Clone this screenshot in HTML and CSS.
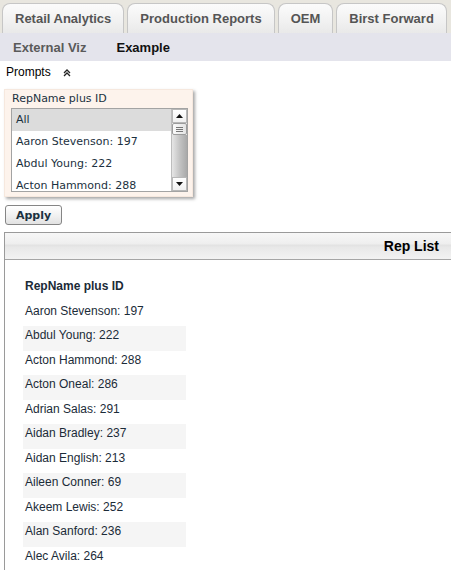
FILE: index.html
```html
<!DOCTYPE html>
<html>
<head>
<meta charset="utf-8">
<link rel="stylesheet" href="styles.css">
</head>
<body>
<div class="tabbar">
  <div class="tab">Retail Analytics</div>
  <div class="tab">Production Reports</div>
  <div class="tab">OEM</div>
  <div class="tab">Birst Forward</div>
  <div class="tab tab-more"></div>
</div>
<div class="subbar">
  <div class="subtab">External Viz</div>
  <div class="subtab active">Example</div>
</div>
<div class="prompts">
  <span>Prompts</span>
  <svg class="chev" width="8" height="8" viewBox="0 0 8 8"><path d="M1 4 L4 1 L7 4 M1 7 L4 4 L7 7" fill="none" stroke="#222" stroke-width="1.3"/></svg>
</div>
<div class="promptbox">
  <div class="plabel">RepName plus ID</div>
  <div class="listbox">
    <div class="items">
      <div class="item selected">All</div>
      <div class="item">Aaron Stevenson: 197</div>
      <div class="item">Abdul Young: 222</div>
      <div class="item">Acton Hammond: 288</div>
    </div>
    <div class="sbar">
      <div class="sbtn"><svg width="7" height="4" viewBox="0 0 7 4"><path d="M0 4 L3.5 0 L7 4 Z" fill="#111"/></svg></div>
      <div class="thumb"><i></i><i></i><i></i></div>
      <div class="track"></div>
      <div class="sbtn"><svg width="7" height="4" viewBox="0 0 7 4"><path d="M0 0 L3.5 4 L7 0 Z" fill="#111"/></svg></div>
    </div>
  </div>
</div>
<button class="apply">Apply</button>
<div class="panel">
  <div class="phead">Rep List</div>
  <div class="pbody">
    <div class="table">
      <div class="row head">RepName plus ID</div>
      <div class="row">Aaron Stevenson: 197</div>
      <div class="row alt">Abdul Young: 222</div>
      <div class="row">Acton Hammond: 288</div>
      <div class="row alt">Acton Oneal: 286</div>
      <div class="row">Adrian Salas: 291</div>
      <div class="row alt">Aidan Bradley: 237</div>
      <div class="row">Aidan English: 213</div>
      <div class="row alt">Aileen Conner: 69</div>
      <div class="row">Akeem Lewis: 252</div>
      <div class="row alt">Alan Sanford: 236</div>
      <div class="row">Alec Avila: 264</div>
    </div>
  </div>
</div>
</body>
</html>
```
FILE: styles.css
```css
html, body {
  margin: 0;
  padding: 0;
  overflow: hidden;
  background: #fff;
  font-family: "Liberation Sans", Arial, sans-serif;
}
.tabbar {
  height: 33px;
  box-sizing: border-box;
  padding: 3px 0 0 2px;
  background: #e8e6df;
  display: flex;
  gap: 3px;
  overflow: hidden;
  white-space: nowrap;
}
.tab {
  flex: none;
  height: 30px;
  box-sizing: border-box;
  padding: 0 12px;
  border: 1px solid #c6c6c6;
  border-bottom: none;
  border-radius: 8px 8px 0 0;
  background: linear-gradient(#fbfbfb, #f1f1f1 60%, #e9e9e9);
  font-weight: bold;
  font-size: 13px;
  line-height: 30px;
  color: #555;
}
.tab-more { margin-left: 1px; width: 60px; }
.subbar {
  height: 28px;
  background: #e4e4ec;
  display: flex;
  gap: 30px;
  padding-left: 13px;
  align-items: center;
}
.subtab {
  font-weight: bold;
  font-size: 13px;
  color: #5a5a5a;
}
.subtab.active { color: #111; }
.prompts {
  height: 22px;
  padding-left: 6px;
  display: flex;
  align-items: center;
  gap: 12px;
  font-size: 12px;
  color: #000;
}
.chev { margin-top: 1px; }
.promptbox {
  margin: 6px 0 0 4px;
  width: 189px;
  box-sizing: border-box;
  padding: 2px 4px 4px 6px;
  background: #fdf3ec;
  border: 1px solid #f6e8de;
  box-shadow: 2px 2px 3px rgba(0,0,0,0.35);
}
.plabel {
  font-family: "DejaVu Sans", Verdana, sans-serif;
  font-size: 11px;
  line-height: 14px;
  padding-left: 1px;
  margin-bottom: 2px;
  color: #1b3140;
}
.listbox {
  height: 84px;
  box-sizing: border-box;
  border: 1px solid #a3a3a3;
  background: #fff;
  display: flex;
}
.items {
  flex: 1;
  overflow: hidden;
}
.item {
  height: 22px;
  line-height: 22px;
  padding-left: 4px;
  font-family: "DejaVu Sans", Verdana, sans-serif;
  font-size: 11px;
  color: #1b3140;
  white-space: nowrap;
}
.item.selected { background: #dcdcdc; }
.sbar {
  width: 16px;
  box-sizing: border-box;
  border-left: 1px solid #bdbdbd;
  display: flex;
  flex-direction: column;
  background: #eee;
}
.sbtn {
  height: 14px;
  box-sizing: border-box;
  border: 1px solid #b8b8b8;
  background: linear-gradient(#fff, #f0f0f0);
  display: flex;
  align-items: center;
  justify-content: center;
}
.thumb {
  height: 12px;
  box-sizing: border-box;
  border: 1px solid #9c9c9c;
  border-radius: 2px;
  background: linear-gradient(90deg, #fafafa, #e4e4e4);
  display: flex;
  flex-direction: column;
  justify-content: center;
  gap: 1px;
  padding: 0 3px;
}
.thumb i {
  display: block;
  height: 1px;
  background: #777;
}
.track {
  flex: 1;
  background: linear-gradient(90deg, #e6e6e6, #c4c4c4 50%, #a9a9a9);
}
.apply {
  display: block;
  margin: 8px 0 0 5px;
  width: 57px;
  height: 20px;
  padding: 0;
  border: 1px solid #858585;
  border-radius: 3px;
  background: linear-gradient(#ffffff, #f2f2f2 50%, #e2e2e2);
  font-family: "DejaVu Sans", Verdana, sans-serif;
  font-weight: bold;
  font-size: 11px;
  color: #1b3140;
}
.panel {
  margin: 7px 0 0 4px;
  border-top: 1px solid #9a9a9a;
  border-left: 1px solid #9a9a9a;
}
.phead {
  height: 26px;
  border-bottom: 1px solid #a5a5a5;
  background: linear-gradient(#f7f7f7, #efefef 40%, #e3e3e3 48%, #e8e8e8 56%, #f2f2f2);
  text-align: right;
  padding-right: 12px;
  font-weight: bold;
  font-size: 14px;
  line-height: 26px;
  color: #000;
}
.pbody {
  padding: 17px 0 0 18px;
}
.table { width: 163px; }
.row {
  height: 24px;
  box-sizing: border-box;
  padding: 2px 0 0 2px;
  line-height: 14px;
  font-size: 12px;
  color: #1b2b38;
  white-space: nowrap;
}
.row.head {
  height: 25px;
  font-weight: bold;
}
.row.alt {
  height: 25px;
  background: #f5f5f5;
}
```
